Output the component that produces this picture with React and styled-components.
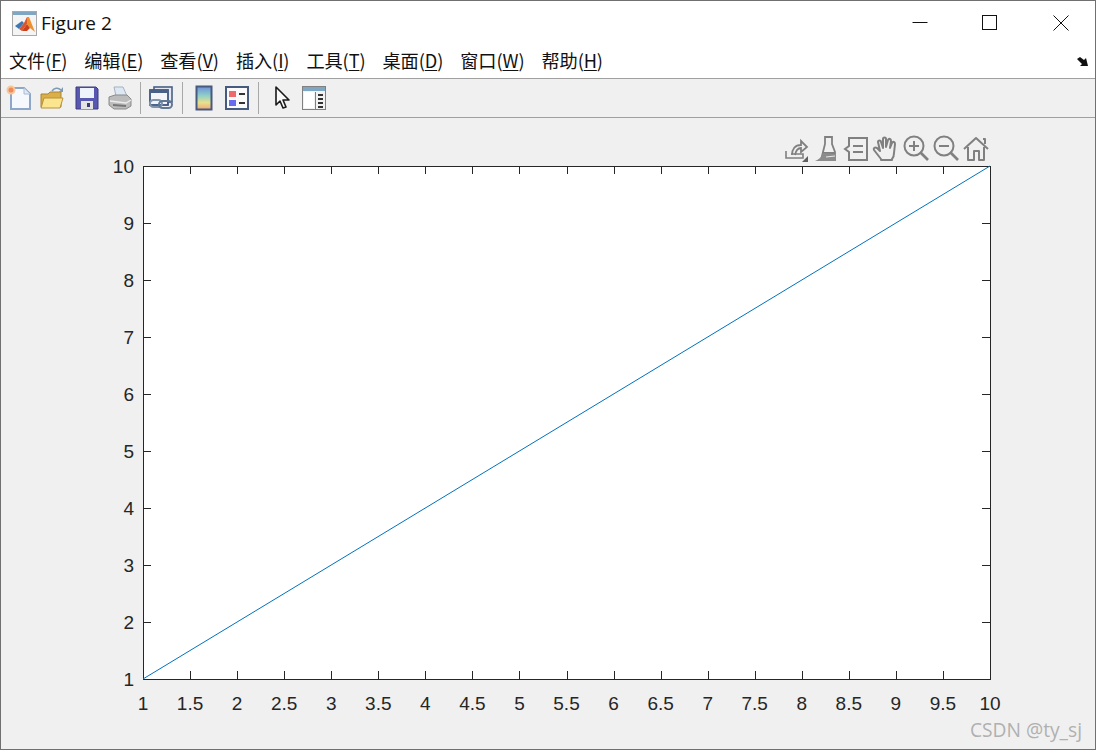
import React from 'react';
import styled, { createGlobalStyle } from 'styled-components';

const GlobalStyle = createGlobalStyle`
  html, body {
    margin: 0;
    padding: 0;
    background: #fff;
  }
`;

const Frame = styled.div`
  position: relative;
  display: flex;
  flex-direction: column;
  width: 1096px;
  height: 750px;
  box-sizing: border-box;
  border: 1px solid #707070;
  background: #f0f0f0;
  overflow: hidden;
`;

const TitleBar = styled.div`
  display: flex;
  align-items: center;
  height: 44px;
  flex: none;
  padding: 0 0 0 11px;
  background: #fff;
`;

const Title = styled.span`
  margin-left: 4px;
  font-family: "Open Sans", "Noto Sans", sans-serif;
  font-size: 19px;
  color: #111;
`;

const WindowControls = styled.div`
  display: flex;
  margin-left: auto;
  height: 100%;
`;

const WindowButton = styled.button`
  display: flex;
  align-items: center;
  justify-content: center;
  width: 70.5px;
  height: 100%;
  padding: 0 0 0 2px;
  border: none;
  background: transparent;
`;

const MenuBar = styled.div`
  display: flex;
  align-items: center;
  gap: 17px;
  height: 34px;
  flex: none;
  padding: 0 6px 4px 8px;
  box-sizing: border-box;
  background: #fff;
  border-bottom: 1px solid #a0a0a0;
`;

const MenuItem = styled.span`
  font-family: "Noto Sans CJK SC", "Open Sans", sans-serif;
  font-size: 18.2px;
  letter-spacing: -0.1px;
  color: #111;
  white-space: nowrap;

  u {
    text-underline-offset: 2px;
    text-decoration-thickness: 1px;
  }
`;

const MenuCorner = styled.svg`
  margin-left: auto;
  margin-top: 5px;
`;

const Toolbar = styled.div`
  display: flex;
  align-items: center;
  height: 39px;
  flex: none;
  box-sizing: border-box;
  padding-left: 1px;
  background: #f0f0f0;
  border-bottom: 1px solid #a0a0a0;
`;

const ToolButton = styled.div`
  display: flex;
  align-items: center;
  justify-content: center;
  width: ${(props) => props.$width || 33}px;
  height: 100%;
`;

const ToolSeparator = styled.div`
  width: 1px;
  height: 32px;
  margin: 0 ${(props) => props.$right}px 0 ${(props) => props.$left}px;
  background: #a8a8a8;
`;

const PlotArea = styled.div`
  position: relative;
  flex: 1;
  background: #f0f0f0;
`;

const Chart = styled.svg`
  display: block;
  width: 100%;
  height: 100%;
`;

const TickLabel = styled.text`
  font-family: "Liberation Sans", Arial, sans-serif;
  font-size: 19px;
  fill: #262626;
`;

const AxesToolbar = styled.div`
  position: absolute;
  top: 18px;
  left: 782px;
  display: flex;
  gap: 4px;
`;

const AxesTool = styled.svg`
  display: block;
  overflow: visible;
  fill: none;
  stroke: #808080;
  stroke-width: 2;
`;

const Watermark = styled.span`
  position: absolute;
  right: 13px;
  bottom: 6px;
  font-family: "Open Sans", "Noto Sans", sans-serif;
  font-size: 19.2px;
  color: #b0b0b0;
`;

const menus = [
  ['文件', 'F'],
  ['编辑', 'E'],
  ['查看', 'V'],
  ['插入', 'I'],
  ['工具', 'T'],
  ['桌面', 'D'],
  ['窗口', 'W'],
  ['帮助', 'H'],
];

const X0 = 143;
const X1 = 990;
const Y0 = 679;
const Y1 = 166;
const xTicks = Array.from({ length: 19 }, (_, i) => 1 + i * 0.5);
const yTicks = Array.from({ length: 10 }, (_, i) => 1 + i);
const xPos = (v) => X0 + ((v - 1) / 9) * (X1 - X0);
const yPos = (v) => Y0 - ((v - 1) / 9) * (Y0 - Y1);

const MatlabIcon = () => (
  <svg width="25" height="25" viewBox="0 0 25 25">
    <rect x="0.5" y="0.5" width="24" height="24" fill="#f4f4f4" stroke="#a9a9a9" />
    <rect x="1" y="1" width="23" height="3" fill="#7fa7c4" />
    <polygon points="3,15 10,10 12,12 7,18" fill="#3d78b5" />
    <polygon points="7,18 12,12 15,6 17,6 15,13 10,20" fill="#d9572a" />
    <polygon points="15,6 17,6 23,21 18,17 15,13" fill="#f0902c" />
    <polygon points="10,20 15,13 18,17 15,20" fill="#c9401f" />
  </svg>
);

const NewIcon = () => (
  <svg width="26" height="26" viewBox="0 0 26 26">
    <path d="M5 3h13l6 6v15H5z" fill="#f5f9fd" stroke="#8ea6c8" strokeWidth="2" />
    <path d="M18 3v6h6" fill="#dfe9f4" stroke="#a9bcd6" />
    <circle cx="5" cy="5" r="3.5" fill="#ef8a5c" stroke="#f7c79a" strokeWidth="2" />
  </svg>
);

const OpenIcon = () => (
  <svg width="26" height="26" viewBox="0 0 26 26">
    <path d="M2 22V9h7l2-2h11v15z" fill="#dcae48" stroke="#a98433" />
    <path d="M2 23l3-10h19l-3 10z" fill="#fbe58e" stroke="#b8923a" />
    <path d="M13 6c2-3 6-4 9-1" fill="none" stroke="#7f9ab5" strokeWidth="1.6" />
    <path d="M24 2v5h-4z" fill="#7f9ab5" />
  </svg>
);

const SaveIcon = () => (
  <svg width="26" height="26" viewBox="0 0 26 26">
    <path d="M2 2h20l2 2v20H2z" fill="#5858b0" stroke="#3b3b7e" />
    <rect x="6" y="3" width="14" height="10" fill="#eef2fa" />
    <rect x="7" y="16" width="12" height="8" fill="#e4e4e4" />
    <rect x="13" y="18" width="3" height="4" fill="#3b3b7e" />
  </svg>
);

const PrintIcon = () => (
  <svg width="26" height="26" viewBox="0 0 26 26">
    <path d="M7 2h9l4 9H9z" fill="#dce8f4" stroke="#a5b3c0" />
    <path d="M2 12l6-2h12l4 4v7l-5 3H7l-5-4z" fill="#bcbcbc" stroke="#8a8a8a" />
    <path d="M3 16l16 2 5-3" fill="none" stroke="#ececec" strokeWidth="1.4" />
    <path d="M6 20l13 1" stroke="#777" strokeWidth="2" />
  </svg>
);

const LinkIcon = () => (
  <svg width="26" height="26" viewBox="0 0 26 26">
    <rect x="6" y="2" width="18" height="15" fill="#e4e8f0" stroke="#4a5f86" strokeWidth="1.6" />
    <rect x="2" y="5" width="18" height="15" fill="#f2f4f8" stroke="#3f5480" strokeWidth="1.8" />
    <rect x="2" y="5" width="18" height="3" fill="#4a5f86" />
    <rect x="2" y="15" width="12" height="7" rx="3.5" fill="none" stroke="#7f95ad" strokeWidth="2" />
    <rect x="11" y="16" width="13" height="7" rx="3.5" fill="none" stroke="#5f7896" strokeWidth="2" />
  </svg>
);

const ColorbarIcon = () => (
  <svg width="18" height="26" viewBox="0 0 18 26">
    <defs>
      <linearGradient id="cbar" x1="0" y1="0" x2="0" y2="1">
        <stop offset="0" stopColor="#6f8fd8" />
        <stop offset="0.4" stopColor="#8fd0c8" />
        <stop offset="0.7" stopColor="#e8e08c" />
        <stop offset="1" stopColor="#f0a878" />
      </linearGradient>
    </defs>
    <rect x="1.5" y="1.5" width="15" height="23" fill="url(#cbar)" stroke="#46597f" strokeWidth="2" />
  </svg>
);

const LegendIcon = () => (
  <svg width="24" height="24" viewBox="0 0 24 24">
    <rect x="1" y="1" width="22" height="22" fill="#fafafa" stroke="#46597f" strokeWidth="2" />
    <rect x="4" y="5" width="7" height="6" fill="#ee6a6a" />
    <rect x="4" y="14" width="7" height="6" fill="#6a6aee" />
    <path d="M14 8h6M14 17h6" stroke="#333" strokeWidth="2" />
  </svg>
);

const PointerIcon = () => (
  <svg width="20" height="26" viewBox="0 0 20 26">
    <path d="M4 2v18l4-4 3 7 3-1-3-7h6z" fill="#fafafa" stroke="#1a1a1a" strokeWidth="1.6" strokeLinejoin="round" />
  </svg>
);

const DockIcon = () => (
  <svg width="24" height="24" viewBox="0 0 24 24">
    <rect x="0.5" y="0.5" width="23" height="23" fill="#f2f2f2" stroke="#808080" />
    <rect x="1" y="1" width="22" height="4" fill="#7fa7c4" />
    <rect x="2" y="6" width="10" height="16" fill="#fff" />
    <rect x="13" y="6" width="1" height="17" fill="#808080" />
    <path d="M16 9h5M16 13h5M16 17h5M16 21h5" stroke="#333" strokeWidth="2" />
  </svg>
);

const ExportTool = () => (
  <AxesTool width="26" height="26" viewBox="0 0 26 26">
    <path d="M3 15v7h17v-4H8" strokeWidth="1.6" />
    <path d="M9 19c0-6 3-10 9-10V5l6 6-6 5v-4c-3 0-5 2-6 7" strokeWidth="1.8" />
    <path d="M25 20v6h-6z" fill="#5f5f5f" stroke="none" />
  </AxesTool>
);

const BrushTool = () => (
  <AxesTool width="26" height="26" viewBox="-2 0 26 26">
    <path d="M10 1h7v7l3 8v8H6l2-8 2-8z" strokeWidth="1.8" />
    <path d="M8 17h12" />
    <path d="M0 25c3-1 6-3 8-8l12 1v7z" fill="#8c8c8c" stroke="none" />
    <path d="M11 21l9-1" stroke="#e8e8e8" strokeWidth="1.2" />
  </AxesTool>
);

const DataTipTool = () => (
  <AxesTool width="26" height="26" viewBox="-1 0 26 26">
    <path d="M5 2h18v22H5v-8l-4-3 4-3z" />
    <path d="M9 10h10M9 16h10" />
  </AxesTool>
);

const HandTool = () => (
  <AxesTool width="26" height="26" viewBox="0 0 26 26" strokeLinejoin="round" strokeLinecap="round">
    <path d="M8 23L1 14c-1-2 1-3 3-2l3 3-2-9c0-2 3-2 3 0l2 6V3c0-2 3-2 3 0v8l2-7c1-2 3-1 3 1l-1 7 2-5c1-2 3-1 3 1l-1 9c0 3-1 5-2 6v1H8z" />
  </AxesTool>
);

const ZoomTool = ({ plus }) => (
  <AxesTool width="26" height="26" viewBox="0 0 26 26">
    <circle cx="11" cy="10" r="9.5" />
    <path d="M6 10h10" />
    {plus && <path d="M11 5v10" />}
    <path d="M17 16l8 8" strokeWidth="2.6" />
  </AxesTool>
);

const HomeTool = () => (
  <AxesTool width="26" height="26" viewBox="0 0 26 26" strokeLinejoin="round">
    <path d="M1 13L13 2l12 11" />
    <path d="M5 11v13h6v-9h5v9h5V11" />
    <path d="M20 3h2v5" />
  </AxesTool>
);

const App = () => (
  <>
    <GlobalStyle />
    <Frame>
      <TitleBar>
        <MatlabIcon />
        <Title>Figure 2</Title>
        <WindowControls>
          <WindowButton>
            <svg width="16" height="16" viewBox="0 0 16 16">
              <path d="M0.5 7.5h15" stroke="#111" />
            </svg>
          </WindowButton>
          <WindowButton>
            <svg width="16" height="16" viewBox="0 0 16 16">
              <rect x="0.5" y="0.5" width="14" height="14" fill="none" stroke="#111" />
            </svg>
          </WindowButton>
          <WindowButton>
            <svg width="16" height="16" viewBox="0 0 16 16">
              <path d="M0.5 0.5l15 15M15.5 0.5l-15 15" stroke="#111" />
            </svg>
          </WindowButton>
        </WindowControls>
      </TitleBar>

      <MenuBar>
        {menus.map(([label, key]) => (
          <MenuItem key={key}>
            {label}(<u>{key}</u>)
          </MenuItem>
        ))}
        <MenuCorner width="12" height="10" viewBox="0 0 12 10">
          <path d="M0 2l3-2 4 3 2-2 2 8H3l2-2z" fill="#111" />
        </MenuCorner>
      </MenuBar>

      <Toolbar>
        <ToolButton><NewIcon /></ToolButton>
        <ToolButton><OpenIcon /></ToolButton>
        <ToolButton $width={38}><SaveIcon /></ToolButton>
        <ToolButton $width={28}><PrintIcon /></ToolButton>
        <ToolSeparator $left={6} $right={6} />
        <ToolButton $width={28}><LinkIcon /></ToolButton>
        <ToolSeparator $left={7} $right={4} />
        <ToolButton><ColorbarIcon /></ToolButton>
        <ToolButton $width={34}><LegendIcon /></ToolButton>
        <ToolSeparator $left={4} $right={7} />
        <ToolButton $width={32}><PointerIcon /></ToolButton>
        <ToolButton $width={32}><DockIcon /></ToolButton>
      </Toolbar>

      <PlotArea>
        <Chart viewBox="1 118 1094 631">
          <rect x={X0} y={Y1} width={X1 - X0} height={Y0 - Y1} fill="#fff" />
          {xTicks.map((v) => {
            const x = Math.round(xPos(v)) + 0.5;
            return (
              <g key={v}>
                <path d={`M${x} ${Y0}v-8M${x} ${Y1}v8`} stroke="#262626" />
                <TickLabel x={xPos(v)} y={709.5} textAnchor="middle">{v}</TickLabel>
              </g>
            );
          })}
          {yTicks.map((v) => {
            const y = Math.round(yPos(v)) + 0.5;
            return (
              <g key={v}>
                <path d={`M${X0} ${y}h8M${X1} ${y}h-8`} stroke="#262626" />
                <TickLabel x={134} y={yPos(v) + 7} textAnchor="end">{v}</TickLabel>
              </g>
            );
          })}
          <rect x={X0 + 0.5} y={Y1 + 0.5} width={X1 - X0} height={Y0 - Y1} fill="none" stroke="#262626" />
          <path d={`M${X0} ${Y0}L${X1} ${Y1}`} stroke="#0072bd" strokeWidth="1" fill="none" />
        </Chart>
        <AxesToolbar>
          <ExportTool />
          <BrushTool />
          <DataTipTool />
          <HandTool />
          <ZoomTool plus />
          <ZoomTool />
          <HomeTool />
        </AxesToolbar>
        <Watermark>CSDN @ty_sj</Watermark>
      </PlotArea>
    </Frame>
  </>
);

export default App;
